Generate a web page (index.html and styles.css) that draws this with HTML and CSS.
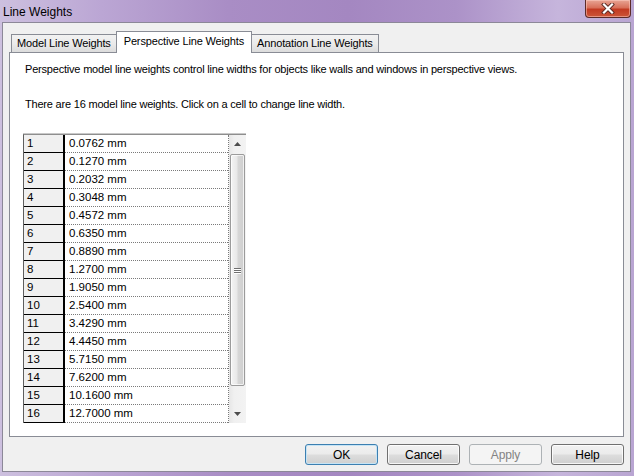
FILE: index.html
```html
<!DOCTYPE html>
<html lang="en">
<head>
    <meta charset="UTF-8">
    <title>Line Weights</title>
    <link rel="stylesheet" href="styles.css">
</head>
<body>
    <div class="window">
        <div class="titlebar">
            <span class="title">Line Weights</span>
            <button class="close">
                <svg width="14" height="11" viewBox="0 0 14 11">
                    <path d="M3 1.5 L11 9.5 M11 1.5 L3 9.5" stroke="#5a2a24" stroke-width="4" stroke-linecap="square"/>
                    <path d="M3 1.5 L11 9.5 M11 1.5 L3 9.5" stroke="#fff" stroke-width="2.2" stroke-linecap="square"/>
                </svg>
            </button>
        </div>
        <div class="client">
            <div class="tabs">
                <div class="tab">Model Line Weights</div>
                <div class="tab active">Perspective Line Weights</div>
                <div class="tab">Annotation Line Weights</div>
            </div>
            <div class="panel">
                <p class="intro">Perspective model line weights control line widths for objects like walls and windows in perspective views.</p>
                <p class="intro second">There are 16 model line weights. Click on a cell to change line width.</p>
                <div class="grid">
                    <div class="rows" id="rows"></div>
                    <div class="scrollbar">
                        <div class="arrow">
                            <svg width="7" height="4" viewBox="0 0 7 4"><path d="M0 4 L3.5 0 L7 4 Z" fill="#4d4d4d"/></svg>
                        </div>
                        <div class="track">
                            <div class="thumb">
                                <span class="grip"></span>
                                <span class="grip"></span>
                                <span class="grip"></span>
                            </div>
                        </div>
                        <div class="arrow">
                            <svg width="7" height="4" viewBox="0 0 7 4"><path d="M0 0 L7 0 L3.5 4 Z" fill="#4d4d4d"/></svg>
                        </div>
                    </div>
                </div>
            </div>
            <div class="buttons">
                <button class="btn default">OK</button>
                <button class="btn">Cancel</button>
                <button class="btn" disabled>Apply</button>
                <button class="btn">Help</button>
            </div>
        </div>
    </div>
    <script>
        const weights = ['0.0762', '0.1270', '0.2032', '0.3048', '0.4572', '0.6350', '0.8890', '1.2700',
            '1.9050', '2.5400', '3.4290', '4.4450', '5.7150', '7.6200', '10.1600', '12.7000'];
        const rows = document.getElementById('rows');

        weights.forEach((w, i) => {
            const row = document.createElement('div');
            row.className = 'row';
            row.innerHTML = `<div class="num">${i + 1}</div><div class="val">${w} mm</div>`;
            rows.appendChild(row);
        });
    </script>
</body>
</html>
```

FILE: styles.css
```css
html, body {
    margin: 0;
    padding: 0;
    height: 100%;
    overflow: hidden;
}

body {
    font-family: "Liberation Sans", Arial, sans-serif;
    font-size: 11px;
    letter-spacing: -0.15px;
    color: #000;
}

.window {
    width: 634px;
    height: 476px;
    box-sizing: border-box;
    padding: 0 3px 4px 2px;
    display: flex;
    flex-direction: column;
    background: linear-gradient(90deg, #cdc0df 0%, #bba6d4 16%, #a98dc5 36%, #a487c1 55%, #ac92c8 72%, #c6b5dc 88%, #b9a5d2 100%);
}

.titlebar {
    height: 22px;
    display: flex;
    justify-content: space-between;
    align-items: flex-start;
}

.title {
    padding: 5px 0 0 1px;
    font-size: 12px;
    letter-spacing: 0;
    color: #000;
}

.close {
    width: 46px;
    height: 18px;
    margin: 0;
    padding: 0;
    border: 1px solid #5b2b28;
    border-top: none;
    border-radius: 0 0 4px 4px;
    background: linear-gradient(180deg, #e8a595 0%, #d8705a 45%, #c23a22 55%, #cc5538 100%);
    box-shadow: inset 0 0 0 1px rgba(255, 210, 200, 0.5);
    display: flex;
    align-items: center;
    justify-content: center;
}

.client {
    flex: 1;
    background: #f0f0f0;
    border: 1px solid #8c8898;
    display: flex;
    flex-direction: column;
    padding: 8px 6px 6px 6px;
}

/* tabs */

.tabs {
    height: 21px;
    display: flex;
    align-items: flex-end;
    padding-left: 2px;
}

.tab {
    height: 17px;
    line-height: 17px;
    padding: 0 5px;
    border: 1px solid #898c95;
    border-bottom: none;
    background: linear-gradient(180deg, #f2f2f2 0%, #ebebeb 50%, #dcdcdc 100%);
}

.tab + .tab {
    border-left: none;
}

.tab.active {
    position: relative;
    z-index: 1;
    height: 21px;
    line-height: 18px;
    margin: 0 -1px -1px -1px;
    padding: 0 7px;
    background: #fff;
    border-left: 1px solid #898c95;
}

.tab.active + .tab {
    border-left: 1px solid #898c95;
}

/* panel */

.panel {
    flex: 1;
    background: #fff;
    border: 1px solid #898c95;
    padding: 10px 13px 0 13px;
}

.intro {
    margin: 0 0 0 2px;
    line-height: 13px;
    letter-spacing: -0.2px;
}

.intro.second {
    margin-top: 22px;
}

.grid {
    margin-top: 23px;
    width: 222px;
    display: flex;
    border-top: 1px solid #8e8e8e;
    border-left: 1px solid #5e5e5e;
    box-shadow: 0 -1px 0 #c8c8c8;
}

.rows {
    width: 204px;
    border-right: 1px dotted #7a7a7a;
}

.row {
    height: 18px;
    display: flex;
}

.num {
    width: 36px;
    padding-left: 3px;
    line-height: 17px;
    font-size: 11.5px;
    letter-spacing: 0;
    background: #f0f0f0;
    border-right: 2px solid #000;
    border-bottom: 1px solid #000;
}

.val {
    flex: 1;
    padding-left: 4px;
    line-height: 17px;
    font-size: 11.5px;
    letter-spacing: 0;
    border-bottom: 1px dotted #7a7a7a;
}

/* scrollbar */

.scrollbar {
    width: 17px;
    display: flex;
    flex-direction: column;
    background: linear-gradient(90deg, #e6e6e6 0%, #f0f0f0 30%, #f3f3f3 100%);
}

.arrow {
    height: 18px;
    display: flex;
    align-items: center;
    justify-content: center;
}

.track {
    flex: 1;
    padding: 1px;
}

.thumb {
    height: 230px;
    border: 1px solid #9b9b9b;
    border-radius: 2px;
    background: linear-gradient(90deg, #f4f4f4 0%, #e8e8e8 45%, #d6d6d6 55%, #cfcfcf 100%);
    box-shadow: inset 0 0 0 1px rgba(255, 255, 255, 0.7);
    display: flex;
    flex-direction: column;
    align-items: center;
    justify-content: center;
    gap: 1px;
}

.grip {
    width: 7px;
    height: 1px;
    background: #6f6f6f;
    box-shadow: 0 1px 0 #fff;
}

/* buttons */

.buttons {
    margin-top: 7px;
    display: flex;
    justify-content: flex-end;
    gap: 9px;
}

.btn {
    width: 73px;
    height: 21px;
    padding: 0;
    font-family: "Liberation Sans", Arial, sans-serif;
    font-size: 12px;
    letter-spacing: -0.1px;
    color: #000;
    border: 1px solid #707070;
    border-radius: 3px;
    background: linear-gradient(180deg, #f2f2f2 0%, #ebebeb 48%, #dddddd 52%, #cfcfcf 100%);
    box-shadow: inset 0 0 0 1px rgba(255, 255, 255, 0.8);
}

.btn.default {
    border-color: #3c7fb1;
    box-shadow: inset 0 0 0 1px #c6e4f5;
}

.btn:disabled {
    color: #838383;
    border-color: #adb2b5;
    background: #f4f4f4;
    box-shadow: none;
}
```
